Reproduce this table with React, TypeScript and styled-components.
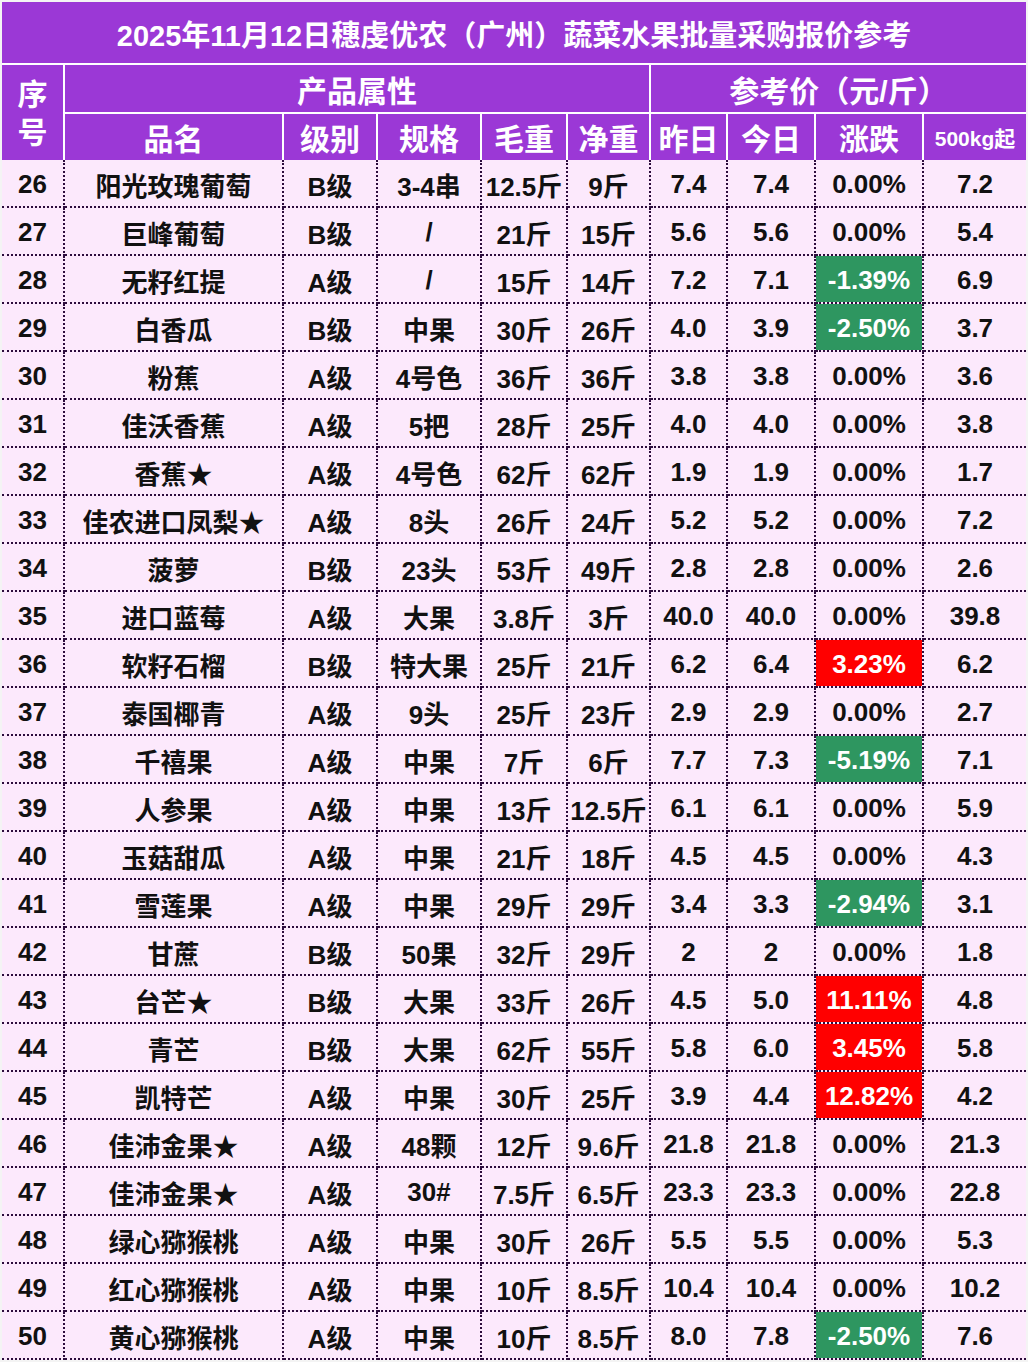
import React from 'react';
import styled, { createGlobalStyle } from 'styled-components';

const GlobalStyle = createGlobalStyle`
  body {
    margin: 0;
    background: #f4f4f4;
    font-family: "Liberation Sans", "Noto Sans CJK SC", sans-serif;
  }
`;

const PURPLE = '#9b38d6';
const DOT = '#2c0c3c';

const Sheet = styled.div`
  width: 1024px;
  margin: 2px 0 0 2px;
`;

const Head = styled.div`
  display: grid;
  grid-template-columns: 61px 217px 92px 102px 84px 81px 75px 86px 106px 102px;
  grid-template-rows: 61px 47px 46px;
  gap: 2px;
  background: #fff;
`;

const HeadCell = styled.div<{ $col?: string; $row?: string; $size?: number }>`
  grid-column: ${p => p.$col ?? 'auto'};
  grid-row: ${p => p.$row ?? 'auto'};
  background: ${PURPLE};
  color: #fff;
  font-weight: 700;
  font-size: ${p => p.$size ?? 30}px;
  display: flex;
  align-items: center;
  justify-content: center;
  white-space: nowrap;
`;

const Stacked = styled(HeadCell)`
  flex-direction: column;
  line-height: 38px;
  padding-top: 2px;
`;

const Row = styled.div`
  display: grid;
  grid-template-columns: 63px 219px 94px 104px 86px 83px 77px 88px 108px 102px;
  height: 48px;
  background: #fce9fc;
`;

const Cell = styled.div<{ $tone?: 'up' | 'down' }>`
  display: flex;
  align-items: center;
  justify-content: center;
  padding-top: 3px;
  border-bottom: 2px dotted ${DOT};
  border-right: 2px dotted ${DOT};
  background: ${p => (p.$tone === 'up' ? '#ff0000' : p.$tone === 'down' ? '#2e9660' : 'transparent')};
  background-clip: padding-box;
  color: ${p => (p.$tone ? '#fff' : '#111')};
  font-size: 26px;
  font-weight: 700;
  white-space: nowrap;
  &:last-child {
    border-right: none;
  }
`;

type Item = [string, string, string, string, string, string, string, string, string, string];

const items: Item[] = [
  ['26', '阳光玫瑰葡萄', 'B级', '3-4串', '12.5斤', '9斤', '7.4', '7.4', '0.00%', '7.2'],
  ['27', '巨峰葡萄', 'B级', '/', '21斤', '15斤', '5.6', '5.6', '0.00%', '5.4'],
  ['28', '无籽红提', 'A级', '/', '15斤', '14斤', '7.2', '7.1', '-1.39%', '6.9'],
  ['29', '白香瓜', 'B级', '中果', '30斤', '26斤', '4.0', '3.9', '-2.50%', '3.7'],
  ['30', '粉蕉', 'A级', '4号色', '36斤', '36斤', '3.8', '3.8', '0.00%', '3.6'],
  ['31', '佳沃香蕉', 'A级', '5把', '28斤', '25斤', '4.0', '4.0', '0.00%', '3.8'],
  ['32', '香蕉★', 'A级', '4号色', '62斤', '62斤', '1.9', '1.9', '0.00%', '1.7'],
  ['33', '佳农进口凤梨★', 'A级', '8头', '26斤', '24斤', '5.2', '5.2', '0.00%', '7.2'],
  ['34', '菠萝', 'B级', '23头', '53斤', '49斤', '2.8', '2.8', '0.00%', '2.6'],
  ['35', '进口蓝莓', 'A级', '大果', '3.8斤', '3斤', '40.0', '40.0', '0.00%', '39.8'],
  ['36', '软籽石榴', 'B级', '特大果', '25斤', '21斤', '6.2', '6.4', '3.23%', '6.2'],
  ['37', '泰国椰青', 'A级', '9头', '25斤', '23斤', '2.9', '2.9', '0.00%', '2.7'],
  ['38', '千禧果', 'A级', '中果', '7斤', '6斤', '7.7', '7.3', '-5.19%', '7.1'],
  ['39', '人参果', 'A级', '中果', '13斤', '12.5斤', '6.1', '6.1', '0.00%', '5.9'],
  ['40', '玉菇甜瓜', 'A级', '中果', '21斤', '18斤', '4.5', '4.5', '0.00%', '4.3'],
  ['41', '雪莲果', 'A级', '中果', '29斤', '29斤', '3.4', '3.3', '-2.94%', '3.1'],
  ['42', '甘蔗', 'B级', '50果', '32斤', '29斤', '2', '2', '0.00%', '1.8'],
  ['43', '台芒★', 'B级', '大果', '33斤', '26斤', '4.5', '5.0', '11.11%', '4.8'],
  ['44', '青芒', 'B级', '大果', '62斤', '55斤', '5.8', '6.0', '3.45%', '5.8'],
  ['45', '凯特芒', 'A级', '中果', '30斤', '25斤', '3.9', '4.4', '12.82%', '4.2'],
  ['46', '佳沛金果★', 'A级', '48颗', '12斤', '9.6斤', '21.8', '21.8', '0.00%', '21.3'],
  ['47', '佳沛金果★', 'A级', '30#', '7.5斤', '6.5斤', '23.3', '23.3', '0.00%', '22.8'],
  ['48', '绿心猕猴桃', 'A级', '中果', '30斤', '26斤', '5.5', '5.5', '0.00%', '5.3'],
  ['49', '红心猕猴桃', 'A级', '中果', '10斤', '8.5斤', '10.4', '10.4', '0.00%', '10.2'],
  ['50', '黄心猕猴桃', 'A级', '中果', '10斤', '8.5斤', '8.0', '7.8', '-2.50%', '7.6'],
];

function toneOf(change: string): 'up' | 'down' | undefined {
  const v = parseFloat(change);
  if (v > 0) return 'up';
  if (v < 0) return 'down';
  return undefined;
}

export default function App() {
  return (
    <>
      <GlobalStyle />
      <Sheet>
        <Head>
          <HeadCell $col="1 / 11" $row="1" $size={29}>
            2025年11月12日穗虔优农（广州）蔬菜水果批量采购报价参考
          </HeadCell>
          <Stacked $col="1" $row="2 / 4">
            <span>序</span>
            <span>号</span>
          </Stacked>
          <HeadCell $col="2 / 7" $row="2">产品属性</HeadCell>
          <HeadCell $col="7 / 11" $row="2">参考价（元/斤）</HeadCell>
          <HeadCell>品名</HeadCell>
          <HeadCell>级别</HeadCell>
          <HeadCell>规格</HeadCell>
          <HeadCell>毛重</HeadCell>
          <HeadCell>净重</HeadCell>
          <HeadCell>昨日</HeadCell>
          <HeadCell>今日</HeadCell>
          <HeadCell>涨跌</HeadCell>
          <HeadCell $size={21}>500kg起</HeadCell>
        </Head>
        {items.map(it => (
          <Row key={it[0]}>
            {it.map((v, i) => (
              <Cell key={i} $tone={i === 8 ? toneOf(v) : undefined}>
                {v}
              </Cell>
            ))}
          </Row>
        ))}
      </Sheet>
    </>
  );
}
